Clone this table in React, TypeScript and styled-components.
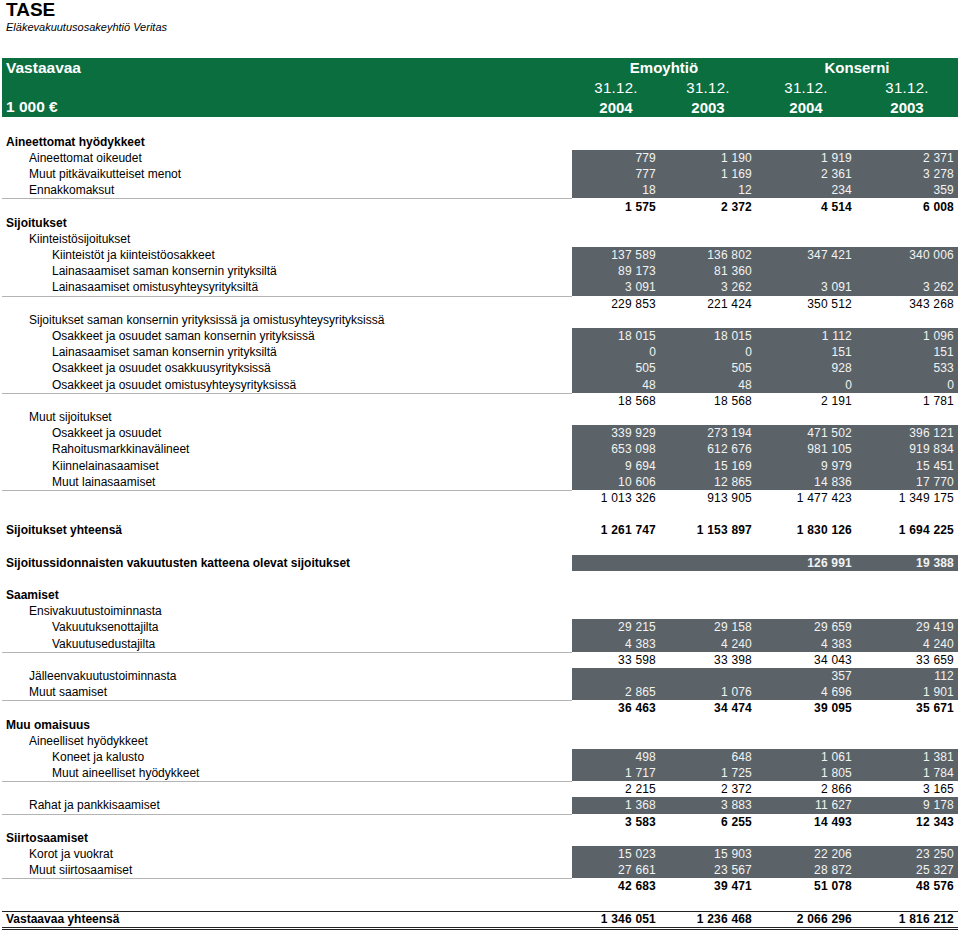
import React from "react";
import styled, { createGlobalStyle, css } from "styled-components";

const GlobalStyle = createGlobalStyle`
  html, body { margin: 0; padding: 0; background: #ffffff; }
  body { font-family: "Liberation Sans", Arial, Helvetica, sans-serif; color: #000; }
`;

const COLS = "570px 88px 96px 100px 102px";
const GREEN = "#0b6e3f";
const SHADE = "#5b6368";

const Page = styled.div`
  width: 956px;
  padding: 0 2px;
`;

const Title = styled.h1`
  margin: 0;
  padding-left: 4px;
  font-size: 19px;
  line-height: 20px;
  font-weight: 700;
`;

const Subtitle = styled.div`
  padding-left: 4px;
  font-size: 11px;
  line-height: 14px;
  font-style: italic;
`;

const Header = styled.div`
  margin-top: 24px;
  background: ${GREEN};
  color: #fff;
  display: grid;
  grid-template-columns: ${COLS};
  grid-auto-rows: 19.7px;
  align-items: center;
  font-size: 15px;
`;

const HeadLabel = styled.div`
  padding-left: 4px;
  font-weight: 700;
  font-size: 15.5px;
`;

const HeadCell = styled.div<{ $span?: number; $bold?: boolean }>`
  grid-column: span ${(p) => p.$span ?? 1};
  text-align: center;
  font-weight: ${(p) => (p.$bold ? 700 : 400)};
  letter-spacing: ${(p) => (p.$bold ? "0" : "0.3px")};
`;

const Body = styled.div`
  margin-top: 16.6px;
`;

const Row = styled.div<{ $grand?: boolean }>`
  display: grid;
  grid-template-columns: ${COLS};
  height: 16.2px;
  align-items: stretch;
  font-size: 12px;
  ${(p) =>
    p.$grand &&
    css`
      height: 15px;
      border-top: 1.6px solid #222;
      border-bottom: 3px double #222;
    `}
`;

const Label = styled.div<{ $level: number; $bold?: boolean; $rule?: boolean }>`
  display: flex;
  align-items: center;
  padding-left: ${(p) => 4 + p.$level * 23}px;
  font-weight: ${(p) => (p.$bold ? 700 : 400)};
  white-space: nowrap;
  box-sizing: border-box;
  ${(p) =>
    p.$rule &&
    css`
      border-top: 1px solid #b4b4b4;
    `}
`;

const Num = styled.div<{ $shade?: boolean; $bold?: boolean }>`
  display: flex;
  align-items: center;
  justify-content: flex-end;
  padding-right: 4px;
  white-space: nowrap;
  font-weight: ${(p) => (p.$bold ? 700 : 400)};
  letter-spacing: 0.2px;
  background: ${(p) => (p.$shade ? SHADE : "transparent")};
  color: ${(p) => (p.$shade ? "#f3f3f3" : "#000")};
`;

type Kind = "head" | "label" | "item" | "sub" | "blank" | "total" | "grand";
type R = {
  k: Kind;
  t?: string;
  l?: number;
  v?: string[];
  b?: boolean;
};

const rows: R[] = [
  { k: "head", t: "Aineettomat hyödykkeet" },
  { k: "item", l: 1, t: "Aineettomat oikeudet", v: ["779", "1 190", "1 919", "2 371"] },
  { k: "item", l: 1, t: "Muut pitkävaikutteiset menot", v: ["777", "1 169", "2 361", "3 278"] },
  { k: "item", l: 1, t: "Ennakkomaksut", v: ["18", "12", "234", "359"] },
  { k: "sub", b: true, v: ["1 575", "2 372", "4 514", "6 008"] },
  { k: "head", t: "Sijoitukset" },
  { k: "label", l: 1, t: "Kiinteistösijoitukset" },
  { k: "item", l: 2, t: "Kiinteistöt ja kiinteistöosakkeet", v: ["137 589", "136 802", "347 421", "340 006"] },
  { k: "item", l: 2, t: "Lainasaamiset saman konsernin yrityksiltä", v: ["89 173", "81 360", "", ""] },
  { k: "item", l: 2, t: "Lainasaamiset omistusyhteysyrityksiltä", v: ["3 091", "3 262", "3 091", "3 262"] },
  { k: "sub", v: ["229 853", "221 424", "350 512", "343 268"] },
  { k: "label", l: 1, t: "Sijoitukset saman konsernin yrityksissä ja omistusyhteysyrityksissä" },
  { k: "item", l: 2, t: "Osakkeet ja osuudet saman konsernin yrityksissä", v: ["18 015", "18 015", "1 112", "1 096"] },
  { k: "item", l: 2, t: "Lainasaamiset saman konsernin yrityksiltä", v: ["0", "0", "151", "151"] },
  { k: "item", l: 2, t: "Osakkeet ja osuudet osakkuusyrityksissä", v: ["505", "505", "928", "533"] },
  { k: "item", l: 2, t: "Osakkeet ja osuudet omistusyhteysyrityksissä", v: ["48", "48", "0", "0"] },
  { k: "sub", v: ["18 568", "18 568", "2 191", "1 781"] },
  { k: "label", l: 1, t: "Muut sijoitukset" },
  { k: "item", l: 2, t: "Osakkeet ja osuudet", v: ["339 929", "273 194", "471 502", "396 121"] },
  { k: "item", l: 2, t: "Rahoitusmarkkinavälineet", v: ["653 098", "612 676", "981 105", "919 834"] },
  { k: "item", l: 2, t: "Kiinnelainasaamiset", v: ["9 694", "15 169", "9 979", "15 451"] },
  { k: "item", l: 2, t: "Muut lainasaamiset", v: ["10 606", "12 865", "14 836", "17 770"] },
  { k: "sub", v: ["1 013 326", "913 905", "1 477 423", "1 349 175"] },
  { k: "blank" },
  { k: "total", t: "Sijoitukset yhteensä", v: ["1 261 747", "1 153 897", "1 830 126", "1 694 225"] },
  { k: "blank" },
  { k: "item", l: 0, b: true, t: "Sijoitussidonnaisten vakuutusten katteena olevat sijoitukset", v: ["", "", "126 991", "19 388"] },
  { k: "blank" },
  { k: "head", t: "Saamiset" },
  { k: "label", l: 1, t: "Ensivakuutustoiminnasta" },
  { k: "item", l: 2, t: "Vakuutuksenottajilta", v: ["29 215", "29 158", "29 659", "29 419"] },
  { k: "item", l: 2, t: "Vakuutusedustajilta", v: ["4 383", "4 240", "4 383", "4 240"] },
  { k: "sub", v: ["33 598", "33 398", "34 043", "33 659"] },
  { k: "item", l: 1, t: "Jälleenvakuutustoiminnasta", v: ["", "", "357", "112"] },
  { k: "item", l: 1, t: "Muut saamiset", v: ["2 865", "1 076", "4 696", "1 901"] },
  { k: "sub", b: true, v: ["36 463", "34 474", "39 095", "35 671"] },
  { k: "head", t: "Muu omaisuus" },
  { k: "label", l: 1, t: "Aineelliset hyödykkeet" },
  { k: "item", l: 2, t: "Koneet ja kalusto", v: ["498", "648", "1 061", "1 381"] },
  { k: "item", l: 2, t: "Muut aineelliset hyödykkeet", v: ["1 717", "1 725", "1 805", "1 784"] },
  { k: "sub", v: ["2 215", "2 372", "2 866", "3 165"] },
  { k: "item", l: 1, t: "Rahat ja pankkisaamiset", v: ["1 368", "3 883", "11 627", "9 178"] },
  { k: "sub", b: true, v: ["3 583", "6 255", "14 493", "12 343"] },
  { k: "head", t: "Siirtosaamiset" },
  { k: "item", l: 1, t: "Korot ja vuokrat", v: ["15 023", "15 903", "22 206", "23 250"] },
  { k: "item", l: 1, t: "Muut siirtosaamiset", v: ["27 661", "23 567", "28 872", "25 327"] },
  { k: "sub", b: true, v: ["42 683", "39 471", "51 078", "48 576"] },
  { k: "blank" },
  { k: "grand", t: "Vastaavaa yhteensä", v: ["1 346 051", "1 236 468", "2 066 296", "1 816 212"] },
];

const EMPTY = ["", "", "", ""];

function TableRow({ r }: { r: R }) {
  const vals = r.v ?? EMPTY;
  switch (r.k) {
    case "head":
      return (
        <Row>
          <Label $level={0} $bold>{r.t}</Label>
          {EMPTY.map((_, i) => <Num key={i} />)}
        </Row>
      );
    case "label":
      return (
        <Row>
          <Label $level={r.l ?? 0}>{r.t}</Label>
          {EMPTY.map((_, i) => <Num key={i} />)}
        </Row>
      );
    case "item":
      return (
        <Row>
          <Label $level={r.l ?? 0} $bold={r.b}>{r.t}</Label>
          {vals.map((x, i) => (
            <Num key={i} $shade $bold={r.b}>{x}</Num>
          ))}
        </Row>
      );
    case "sub":
      return (
        <Row>
          <Label $level={0} $rule />
          {vals.map((x, i) => (
            <Num key={i} $bold={r.b}>{x}</Num>
          ))}
        </Row>
      );
    case "total":
    case "grand":
      return (
        <Row $grand={r.k === "grand"}>
          <Label $level={0} $bold>{r.t}</Label>
          {vals.map((x, i) => (
            <Num key={i} $bold>{x}</Num>
          ))}
        </Row>
      );
    default:
      return <Row />;
  }
}

export default function App() {
  return (
    <Page>
      <GlobalStyle />
      <Title>TASE</Title>
      <Subtitle>Eläkevakuutusosakeyhtiö Veritas</Subtitle>
      <Header>
        <HeadLabel>Vastaavaa</HeadLabel>
        <HeadCell $span={2} $bold>Emoyhtiö</HeadCell>
        <HeadCell $span={2} $bold>Konserni</HeadCell>
        <div />
        <HeadCell>31.12.</HeadCell>
        <HeadCell>31.12.</HeadCell>
        <HeadCell>31.12.</HeadCell>
        <HeadCell>31.12.</HeadCell>
        <HeadLabel>1 000 €</HeadLabel>
        <HeadCell $bold>2004</HeadCell>
        <HeadCell $bold>2003</HeadCell>
        <HeadCell $bold>2004</HeadCell>
        <HeadCell $bold>2003</HeadCell>
      </Header>
      <Body>
        {rows.map((r, i) => (
          <TableRow key={i} r={r} />
        ))}
      </Body>
    </Page>
  );
}
